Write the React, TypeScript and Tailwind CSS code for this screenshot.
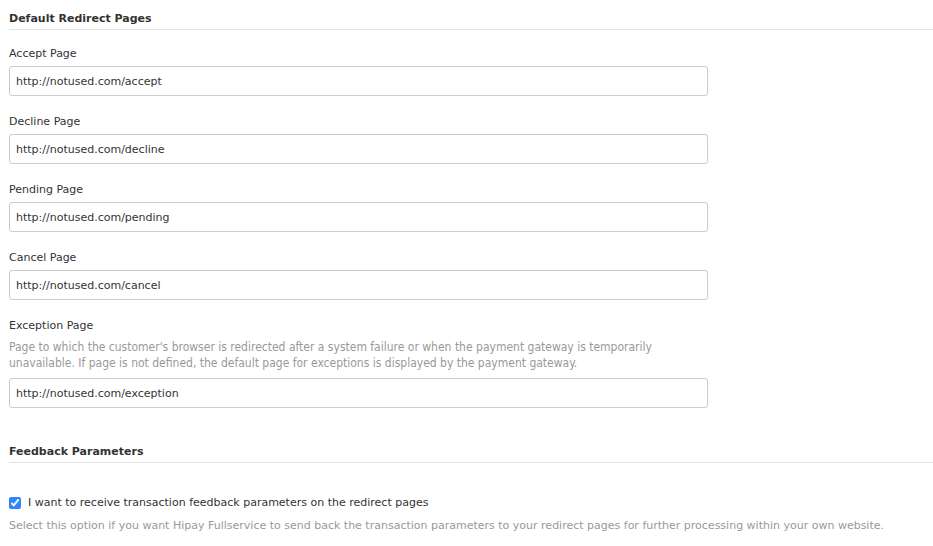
import React from 'react'

const fields = [
  { label: 'Accept Page', value: 'http://notused.com/accept' },
  { label: 'Decline Page', value: 'http://notused.com/decline' },
  { label: 'Pending Page', value: 'http://notused.com/pending' },
  { label: 'Cancel Page', value: 'http://notused.com/cancel' },
]

function UrlInput({ value }: { value: string }) {
  return (
    <input
      type="text"
      defaultValue={value}
      className="block h-[30px] w-[699px] rounded-[3px] border border-[#cccccc] bg-white px-[6px] text-[11px] text-[#333333] outline-none"
    />
  )
}

function SectionTitle({ children }: { children: React.ReactNode }) {
  return (
    <div className="border-b border-[#e5e5e5] pb-[3px] text-[11px] font-bold leading-[14px] text-[#333333]">
      {children}
    </div>
  )
}

export default function App() {
  return (
    <div className="min-h-[546px] bg-white pl-[9px] pt-[12px] font-['DejaVu_Sans',Verdana,sans-serif] text-[#333333]">
      <SectionTitle>Default Redirect Pages</SectionTitle>

      <div className="pt-[17px]">
        {fields.map((f) => (
          <div key={f.label} className="mb-[19px]">
            <label className="mb-[5px] block text-[11px] leading-[14px]">{f.label}</label>
            <UrlInput value={f.value} />
          </div>
        ))}

        <div>
          <label className="mb-[6px] block text-[11px] leading-[14px]">Exception Page</label>
          <p className="mb-[7px] w-[700px] font-['DejaVu_Sans_Condensed','DejaVu_Sans',sans-serif] text-[12px] leading-[16px] text-[#999999]">
            Page to which the customer's browser is redirected after a system failure or when the payment gateway is temporarily unavailable. If page is not defined, the default page for exceptions is displayed by the payment gateway.
          </p>
          <UrlInput value="http://notused.com/exception" />
        </div>
      </div>

      <div className="pt-[37px]">
        <SectionTitle>Feedback Parameters</SectionTitle>
      </div>

      <div className="pt-[33px]">
        <label className="flex items-center gap-[7px] text-[11px] leading-[14px]">
          <input type="checkbox" defaultChecked className="m-0 h-[12px] w-[12px] accent-[#2f86f6]" />
          I want to receive transaction feedback parameters on the redirect pages
        </label>
        <p className="mt-[9px] text-[11px] leading-[14px] text-[#999999]">
          Select this option if you want Hipay Fullservice to send back the transaction parameters to your redirect pages for further processing within your own website.
        </p>
      </div>
    </div>
  )
}
